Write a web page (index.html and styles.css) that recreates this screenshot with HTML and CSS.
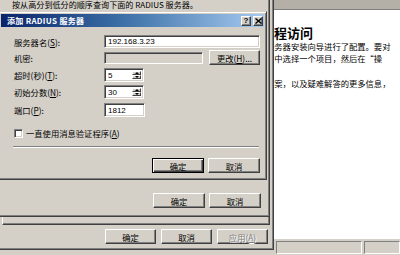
FILE: index.html
```html
<!DOCTYPE html>
<html>
<head>
<meta charset="utf-8">
<link rel="stylesheet" href="styles.css">
</head>
<body>
<div class="desk">
  <div class="mmc">
    <div class="mmc-top"></div>
    <div class="mmc-content">
      <div class="mmc-title">远程访问</div>
      <p class="mmc-line">服务器安装向导进行了配置。要对</p>
      <p class="mmc-line">表中选择一个项目，然后在“操</p>
      <p class="mmc-line gap">方案，以及疑难解答的更多信息，</p>
    </div>
    <div class="statusbar"><div class="panel p1"></div><div class="panel p2"></div></div>
  </div>

  <div class="win sheet">
    <div class="sheet-page"></div>
    <div class="btnrow sheet-btns">
      <button class="btn">确定</button>
      <button class="btn">取消</button>
      <button class="btn" disabled>应用(<u>A</u>)</button>
    </div>
  </div>

  <div class="win auth">
    <div class="auth-text">按从高分到低分的顺序查询下面的 RADIUS 服务器。</div>
    <div class="btnrow auth-btns">
      <button class="btn">确定</button>
      <button class="btn">取消</button>
    </div>
  </div>

  <div class="win add">
    <div class="titlebar">
      <span class="title">添加 RADIUS 服务器</span>
      <span class="tb-btns">
        <span class="tb-btn q">?</span>
        <span class="tb-btn"><svg width="7" height="6" viewBox="0 0 7 6"><path d="M0.5 0.5 L6.5 5.5 M6.5 0.5 L0.5 5.5" stroke="#000" stroke-width="1.4" fill="none"/></svg></span>
      </span>
    </div>
    <div class="add-body">
      <div class="row r1"><span class="lbl">服务器名(<u>S</u>):</span><span class="field w-name">192.168.3.23</span></div>
      <div class="row r2"><span class="lbl">机密:</span><span class="field disabled w-secret"></span><button class="btn w-change">更改(<u>H</u>)...</button></div>
      <div class="row r3"><span class="lbl">超时(秒)(<u>T</u>):</span>
        <span class="field spin"><span class="val">5</span><span class="spin-btns"><span class="sb"><span class="arr up"></span></span><span class="sb"><span class="arr down"></span></span></span></span>
      </div>
      <div class="row r4"><span class="lbl">初始分数(<u>N</u>):</span>
        <span class="field spin"><span class="val">30</span><span class="spin-btns"><span class="sb"><span class="arr up"></span></span><span class="sb"><span class="arr down"></span></span></span></span>
      </div>
      <div class="row r5"><span class="lbl">端口(<u>P</u>):</span><span class="field w-port">1812</span></div>
      <div class="row chk"><span class="box"></span><span>一直使用消息验证程序(<u>A</u>)</span></div>
      <div class="sep"></div>
      <div class="btnrow add-btns">
        <button class="btn default">确定</button>
        <button class="btn">取消</button>
      </div>
    </div>
  </div>
</div>
</body>
</html>
```

FILE: styles.css
```css
* { box-sizing: border-box; margin: 0; padding: 0; }
html, body { width: 400px; height: 255px; overflow: hidden; }
body {
  font-family: "Noto Sans CJK SC", "Liberation Sans", sans-serif;
  font-size: 8.3px;
  color: #000;
  background: #d4d0c8;
}
u { text-decoration: underline; }
.desk { position: relative; width: 400px; height: 255px; overflow: hidden; }

/* background MMC window */
.mmc { position: absolute; inset: 0; display: flex; flex-direction: column; background: #d4d0c8; }
.mmc-top { height: 10px; background: #b4b0a8; border-bottom: 1px solid #808080; }
.mmc-content { flex: 1; background: #fff; padding: 15px 0 0 261px; }
.mmc-title { font-size: 13px; font-weight: bold; line-height: 15px; white-space: nowrap; }
.mmc-line { font-size: 8.3px; line-height: 12px; padding-left: 5px; white-space: nowrap; }
.mmc-line.gap { margin-top: 13px; }
.statusbar { height: 17px; display: flex; gap: 2px; padding: 2px 0 1px 276px; border-top: 1px solid #fff; background: #d4d0c8; }
.panel { border: 1px solid; border-color: #808080 #fff #fff #808080; }
.p1 { width: 86px; }
.p2 { flex: 1; }

/* windows */
.win {
  position: absolute;
  background: #d4d0c8;
  border: 1px solid;
  border-color: #d4d0c8 #404040 #404040 #d4d0c8;
  box-shadow: inset 1px 1px #fff, inset -1px -1px #808080;
  display: flex;
  flex-direction: column;
}
.btnrow { display: flex; justify-content: flex-end; }
.btn {
  font: inherit;
  height: 15px;
  width: 52px;
  background: #d4d0c8;
  color: #000;
  border: 1px solid;
  border-color: #fff #404040 #404040 #fff;
  box-shadow: inset -1px -1px #808080;
  display: flex;
  align-items: center;
  justify-content: center;
  line-height: 10px;
  white-space: nowrap;
}
.btn.default {
  border-color: #000;
  box-shadow: inset 1px 1px #fff, inset -1px -1px #404040, inset -2px -2px #808080;
}
.btn:disabled { color: #808080; text-shadow: 1px 1px #fff; }

/* property sheet */
.sheet { left: -3px; top: -40px; width: 277px; height: 290px; padding: 1px; }
.sheet-page {
  flex: 1;
  margin: 0 2px 0 3px;
  border-left: 1px solid #fff;
  border-bottom: 1px solid #404040;
  border-right: 1px solid #404040;
  box-shadow: inset -1px -1px #808080;
}
.sheet-btns { gap: 5px; padding-right: 4px; margin: 4px 0 4px; }
.sheet-btns .btn { width: 51px; }

/* RADIUS auth dialog */
.auth { left: -3px; top: -40px; width: 273px; height: 257px; padding: 1px; }
.auth-text { margin: 37px 0 0 13px; line-height: 12px; font-size: 8.1px; white-space: nowrap; }
.auth-btns { margin-top: auto; margin-bottom: 7px; padding-right: 7px; gap: 4px; }

/* add dialog */
.add { left: -3px; top: 11px; width: 270px; height: 169px; padding: 2px; }
.titlebar {
  height: 13px;
  margin-left: 1px;
  background: linear-gradient(to right, #0a246a, #3a6ea5 45%, #a6caf0);
  display: flex;
  align-items: center;
  justify-content: space-between;
  padding: 0 1px 0 6px;
}
.title { color: #fff; font-weight: bold; font-size: 8px; line-height: 12px; white-space: nowrap; letter-spacing: 0.3px; }
.tb-btns { display: flex; gap: 2px; }
.tb-btn {
  width: 10px; height: 10px;
  background: #d4d0c8;
  border: 1px solid;
  border-color: #fff #404040 #404040 #fff;
  box-shadow: inset -1px -1px #808080;
  display: flex; align-items: center; justify-content: center;
  font-family: "Liberation Sans", sans-serif;
  font-weight: bold;
  font-size: 8px;
  line-height: 8px;
}
.add-body { display: flex; flex-direction: column; padding: 0 4px 0 14px; }
.row { display: flex; align-items: center; white-space: nowrap; }
.lbl { width: 90px; }
.r1 { margin-top: 8px; height: 13px; }
.r2 { margin-top: 2px; height: 15px; }
.r3 { margin-top: 3px; height: 14px; }
.r4 { margin-top: 3px; height: 14px; }
.r5 { margin-top: 4px; height: 14px; }
.field {
  height: 100%;
  background: #fff;
  border: 1px solid;
  border-color: #808080 #fff #fff #808080;
  box-shadow: inset 1px 1px #404040, inset -1px -1px #d4d0c8;
  font-family: "Liberation Sans", sans-serif;
  font-size: 8px;
  padding-left: 3px;
  display: flex;
  align-items: center;
}
.field.disabled { background: #d4d0c8; height: 12px; }
.w-name { width: 156px; }
.w-secret { width: 99px; }
.w-change { width: 51px; margin-left: 6px; }
.w-port { width: 41px; }
.spin { width: 40px; padding: 2px 2px 2px 3px; justify-content: space-between; }
.spin-btns { width: 9px; height: 100%; display: flex; flex-direction: column; }
.sb {
  flex: 1;
  background: #d4d0c8;
  border: 1px solid;
  border-color: #fff #404040 #404040 #fff;
  display: flex; align-items: center; justify-content: center;
}
.arr { width: 0; height: 0; border-left: 2px solid transparent; border-right: 2px solid transparent; }
.arr.up { border-bottom: 2px solid #000; }
.arr.down { border-top: 2px solid #000; }
.chk { margin-top: 11px; height: 10px; gap: 3px; }
.box {
  width: 9px; height: 9px;
  background: #fff;
  border: 1px solid;
  border-color: #808080 #fff #fff #808080;
  box-shadow: inset 1px 1px #404040, inset -1px -1px #d4d0c8;
}
.sep { margin-top: 8px; height: 2px; border-top: 1px solid #808080; border-bottom: 1px solid #fff; margin-right: 1px; margin-left: -1px; }
.add-btns { margin-top: 10px; gap: 4px; }
```
